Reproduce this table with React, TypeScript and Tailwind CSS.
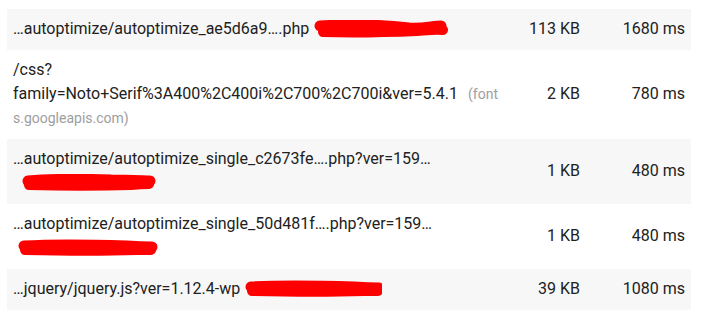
import React from "react";

function Redact({ w, variant }: { w: number; variant: number }) {
  // rough marker strokes over the host names
  const paths = [
    ["M7 6 C40 4 70 5 96 8 C110 9 120 6 128 6", "M10 12 C40 13 80 12 104 11 C116 10 124 9 130 10"],
    ["M7 7 C30 5 60 5 90 6 C110 6 124 7 129 7", "M8 11 C40 12 80 12 110 11 C120 10 126 10 128 10"],
    ["M7 7 C40 5 80 6 110 7 C124 8 132 8 135 8", "M8 11 C50 12 90 12 120 11 C128 11 132 11 134 11"],
  ][variant];
  return (
    <svg width={w} height={18} viewBox={`0 0 ${w} 18`} className="inline-block shrink-0">
      <path d={paths[0]} stroke="#ff0000" strokeWidth={11} strokeLinecap="round" fill="none" />
      <path d={paths[1]} stroke="#ff0000" strokeWidth={10} strokeLinecap="round" fill="none" />
    </svg>
  );
}

function Row({
  gray,
  children,
  size,
  time,
}: {
  gray?: boolean;
  children: React.ReactNode;
  size: string;
  time: string;
}) {
  return (
    <div className={`flex items-center px-[6px] pt-2 pb-[9px] ${gray ? "bg-[#f7f7f7]" : "bg-white"}`}>
      <div className="w-[487px] shrink-0">{children}</div>
      <div className="w-[80px] text-right">{size}</div>
      <div className="flex-1 text-right">{time}</div>
    </div>
  );
}

export default function App() {
  return (
    <div
      className="w-[704px] h-[314px] bg-white pt-[9px] px-[7px] text-[16px] leading-[24px] text-[#212121]"
      style={{ fontFamily: "Roboto, 'Liberation Sans', sans-serif" }}
    >
      <div className="w-[684px]">
        <Row gray size="113 KB" time="1680 ms">
          <div className="flex items-center gap-1">
            <span className="whitespace-nowrap">…autoptimize/autoptimize_ae5d6a9….php</span>
            <Redact w={136} variant={0} />
          </div>
        </Row>
        <Row size="2 KB" time="780 ms">
          <div>/css?</div>
          <div className="whitespace-nowrap">
            family=Noto+Serif%3A400%2C400i%2C700%2C700i&amp;ver=5.4.1
            <span className="ml-[10px] text-[14px] text-[#9e9e9e]">(font</span>
          </div>
          <div className="text-[14px] text-[#9e9e9e]">s.googleapis.com)</div>
        </Row>
        <Row gray size="1 KB" time="480 ms">
          <div className="whitespace-nowrap">…autoptimize/autoptimize_single_c2673fe….php?ver=159…</div>
          <div className="flex h-[24px] items-center pl-[8px]">
            <Redact w={136} variant={1} />
          </div>
        </Row>
        <Row size="1 KB" time="480 ms">
          <div className="whitespace-nowrap">…autoptimize/autoptimize_single_50d481f….php?ver=159…</div>
          <div className="flex h-[24px] items-center pl-[4px]">
            <Redact w={142} variant={2} />
          </div>
        </Row>
        <Row gray size="39 KB" time="1080 ms">
          <div className="flex items-center gap-1">
            <span className="whitespace-nowrap">…jquery/jquery.js?ver=1.12.4-wp</span>
            <Redact w={138} variant={2} />
          </div>
        </Row>
      </div>
    </div>
  );
}
